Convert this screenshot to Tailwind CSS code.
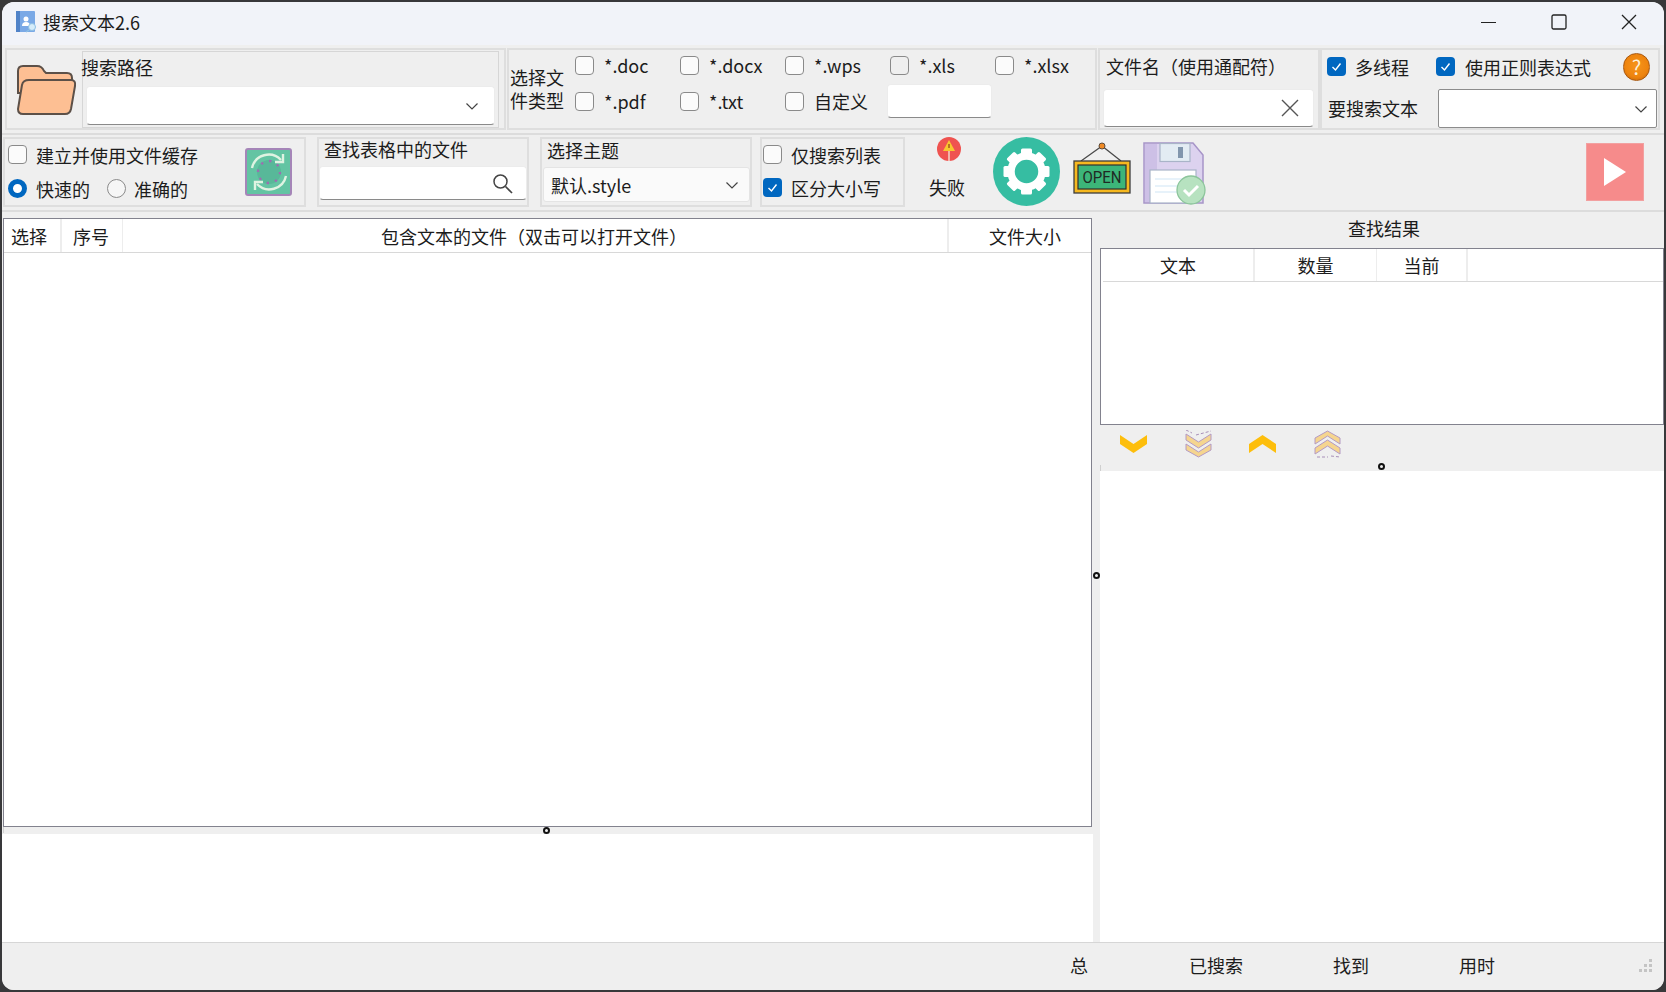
<!DOCTYPE html>
<html lang="zh-CN">
<head>
<meta charset="UTF-8">
<script src="https://cdn.jsdelivr.net/npm/@tailwindcss/browser@4"></script>
<title>搜索文本2.6</title>
</head>
<body class="m-0 w-[1666px] h-[992px] overflow-hidden bg-[#38383a] pt-[2px] pl-[2px] font-['Noto_Sans_CJK_SC',sans-serif] text-[18px] leading-[24px] text-[#1c1c1c]">
<div class="w-[1662px] h-[988px] rounded-[12px] overflow-hidden bg-[#efefef] flex flex-col">

  <!-- title bar -->
  <div class="h-[43px] shrink-0 bg-[#f1f3f9] flex items-center pb-[3px]">
    <svg class="ml-[14px] w-[21px] h-[22px]" viewBox="0 0 21 22">
      <rect x="0" y="0" width="19" height="21" rx="1" fill="#7aa9e6"/>
      <rect x="0" y="0" width="4" height="21" fill="#4f82c8"/>
      <circle cx="10" cy="8" r="2.5" fill="#fff"/>
      <path d="M6 15 Q6 11 10 11 Q14 11 14 15Z" fill="#fff"/>
      <circle cx="16" cy="16" r="3.5" fill="#d5ecfa" stroke="#8cbfe4"/>
      <path d="M13 19 L10 21" stroke="#8cbfe4" stroke-width="1.5"/>
    </svg>
    <span class="ml-[6px]">搜索文本2.6</span>
    <div class="ml-auto flex">
      <div class="w-[70px] h-[40px] flex items-center justify-center">
        <svg class="w-[16px] h-[16px]" viewBox="0 0 16 16"><path d="M0 8.5H15" stroke="#222" stroke-width="1.2"/></svg>
      </div>
      <div class="w-[70px] h-[40px] flex items-center justify-center">
        <svg class="w-[16px] h-[16px]" viewBox="0 0 16 16"><rect x="1" y="1" width="14" height="14" rx="1.5" fill="none" stroke="#222" stroke-width="1.3"/></svg>
      </div>
      <div class="w-[70px] h-[40px] flex items-center justify-center">
        <svg class="w-[16px] h-[16px]" viewBox="0 0 16 16"><path d="M1 1L15 15M15 1L1 15" stroke="#222" stroke-width="1.3"/></svg>
      </div>
    </div>
  </div>

  <!-- first toolbar row -->
  <div class="h-[90px] shrink-0 pt-[3px] pl-[3px] flex gap-[1px] border-b-2 border-[#dcdcdc]">
    <div class="w-[501px] h-[82px] border-2 border-[#dedede] flex">
      <svg class="ml-[8px] mt-[13px] w-[62px] h-[54px]" viewBox="0 0 62 54">
        <path d="M3 8Q3 3 8 3H22Q27 3 29 8L31 10H52Q57 10 57 15V30H3Z" fill="#fdbf93" stroke="#5c5048" stroke-width="2"/>
        <path d="M7 22Q8 17 14 17H56Q61 17 60 23L56 46Q55 51 50 51H8Q3 51 3 46Z" fill="#fdbf93" stroke="#5c5048" stroke-width="2"/>
      </svg>
      <div class="ml-[5px] mt-[1px] w-[417px] h-[77px] border border-[#d6d6d6]">
        <div class="pt-[3px] -ml-[2px]">搜索路径</div>
        <div class="ml-[3px] mt-[7px] w-[409px] h-[39px] bg-white rounded-[4px] border border-[#ececec] border-b-[#8a8a8a] flex items-center justify-end pr-[15px]">
          <svg class="w-[14px] h-[14px]" viewBox="0 0 14 14"><path d="M1.5 4.5L7 10L12.5 4.5" fill="none" stroke="#444" stroke-width="1.2"/></svg>
        </div>
      </div>
    </div>

    <div class="w-[590px] h-[82px] border-2 border-[#dedede] flex">
      <div class="w-[66px] shrink-0 pl-[1px] pt-[16px] leading-[23px]">选择文<br>件类型</div>
      <div class="grid grid-cols-[105px_105px_105px_105px_90px] grid-rows-[30px_30px] gap-y-[6px]">
        <div class="flex items-center gap-[10px]"><div class="w-[19px] h-[19px] rounded-[4px] border border-[#8a8a8a] bg-[#fbfbfb]"></div>*.doc</div>
        <div class="flex items-center gap-[10px]"><div class="w-[19px] h-[19px] rounded-[4px] border border-[#8a8a8a] bg-[#fbfbfb]"></div>*.docx</div>
        <div class="flex items-center gap-[10px]"><div class="w-[19px] h-[19px] rounded-[4px] border border-[#8a8a8a] bg-[#fbfbfb]"></div>*.wps</div>
        <div class="flex items-center gap-[10px]"><div class="w-[19px] h-[19px] rounded-[4px] border border-[#8a8a8a] bg-[#efefef]"></div>*.xls</div>
        <div class="flex items-center gap-[10px]"><div class="w-[19px] h-[19px] rounded-[4px] border border-[#8a8a8a] bg-[#fbfbfb]"></div>*.xlsx</div>
        <div class="flex items-center gap-[10px]"><div class="w-[19px] h-[19px] rounded-[4px] border border-[#8a8a8a] bg-[#fbfbfb]"></div>*.pdf</div>
        <div class="flex items-center gap-[10px]"><div class="w-[19px] h-[19px] rounded-[4px] border border-[#8a8a8a] bg-[#fbfbfb]"></div>*.txt</div>
        <div class="flex items-center gap-[10px]"><div class="w-[19px] h-[19px] rounded-[4px] border border-[#8a8a8a] bg-[#fbfbfb]"></div>自定义</div>
        <input type="text" class="self-center -ml-[3px] w-[105px] h-[34px] bg-white rounded-[4px] border border-[#ececec] border-b-[#8a8a8a]">
      </div>
    </div>

    <div class="w-[222px] h-[82px] border-2 border-[#dedede]">
      <div class="pl-[6px] pt-[4px]">文件名（使用通配符）</div>
      <div class="ml-[3px] mt-[11px] w-[211px] h-[38px] bg-white rounded-[4px] border border-[#ececec] border-b-[#8a8a8a] flex items-center justify-end pr-[14px]">
        <svg class="w-[18px] h-[18px]" viewBox="0 0 18 18"><path d="M1 1L17 17M17 1L1 17" stroke="#555" stroke-width="1.4"/></svg>
      </div>
    </div>

    <div class="w-[340px] h-[82px] border-2 border-[#dedede] -ml-px">
      <div class="mt-[2px] pl-[5px] flex items-center h-[29px]">
        <div class="w-[109px] flex items-center gap-[9px]">
          <div class="w-[19px] h-[19px] rounded-[4px] bg-[#0067c0] flex items-center justify-center"><svg class="w-[13px] h-[13px]" viewBox="0 0 13 13"><path d="M2.5 7L5.5 10L10.5 3.5" fill="none" stroke="#fff" stroke-width="1.4"/></svg></div>
          多线程
        </div>
        <div class="w-[187px] flex items-center gap-[10px]">
          <div class="w-[19px] h-[19px] rounded-[4px] bg-[#0067c0] flex items-center justify-center"><svg class="w-[13px] h-[13px]" viewBox="0 0 13 13"><path d="M2.5 7L5.5 10L10.5 3.5" fill="none" stroke="#fff" stroke-width="1.4"/></svg></div>
          使用正则表达式
        </div>
        <div class="w-[27px] h-[28px] rounded-full bg-[radial-gradient(circle_at_50%_45%,#f6941c_0%,#ee840e_60%,#b85c08_100%)] border border-[#a9580f] flex items-center justify-center text-[#fdf0dc] text-[20px]">?</div>
      </div>
      <div class="mt-[8px] flex items-center">
        <div class="w-[116px] pl-[6px] pb-[2px]">要搜索文本</div>
        <div class="w-[219px] h-[39px] bg-white border border-[#8c8c8c] rounded-[2px] flex items-center justify-end pr-[8px]">
          <svg class="w-[14px] h-[14px]" viewBox="0 0 14 14"><path d="M1.5 4.5L7 10L12.5 4.5" fill="none" stroke="#444" stroke-width="1.2"/></svg>
        </div>
      </div>
    </div>
  </div>

  <!-- second toolbar row -->
  <div class="h-[77px] shrink-0 pt-[2px] pl-[1px] flex border-b-2 border-[#dcdcdc]">
    <div class="w-[303px] h-[70px] border-2 border-[#dedede] flex">
      <div class="pl-[3px] pt-[6px]">
        <div class="flex items-center gap-[9px] h-[19px]"><div class="w-[19px] h-[19px] rounded-[4px] border border-[#8a8a8a] bg-[#fbfbfb]"></div>建立并使用文件缓存</div>
        <div class="flex items-center mt-[15px] h-[19px]">
          <div class="w-[19px] h-[19px] rounded-full border-[5px] border-[#0067c0] bg-white"></div>
          <span class="ml-[9px]">快速的</span>
          <div class="ml-[17px] w-[19px] h-[19px] rounded-full border border-[#8a8a8a] bg-[#f6f6f6]"></div>
          <span class="ml-[8px]">准确的</span>
        </div>
      </div>
      <div class="ml-auto mr-[12px] mt-[9px] w-[47px] h-[48px] rounded-[3px] border-2 border-[#a585b8] bg-[#63c4a3] flex items-center justify-center">
        <svg class="w-[42px] h-[42px]" viewBox="0 0 42 42">
          <circle cx="21" cy="21" r="12" fill="#58b899"/>
          <circle cx="21" cy="21" r="11" fill="none" stroke="#9c6fb0" stroke-width="2.4" stroke-dasharray="2.4 6.2"/>
          <path d="M4 17A17 17 0 0 1 33 9" fill="none" stroke="#dff3e2" stroke-width="2.4"/>
          <path d="M35 3V11H27" fill="none" stroke="#dff3e2" stroke-width="2.4"/>
          <path d="M38 25A17 17 0 0 1 9 33" fill="none" stroke="#dff3e2" stroke-width="2.4"/>
          <path d="M7 39V31H15" fill="none" stroke="#dff3e2" stroke-width="2.4"/>
        </svg>
      </div>
    </div>

    <div class="ml-[11px] w-[212px] h-[70px] border-2 border-[#dedede]">
      <div class="pl-[5px] -mt-[2px]">查找表格中的文件</div>
      <div class="mt-[5px] w-[208px] h-[34px] bg-white rounded-[4px] border border-[#ececec] border-b-[#8a8a8a] flex items-center justify-end pr-[13px]">
        <svg class="w-[21px] h-[21px]" viewBox="0 0 21 21"><circle cx="8.5" cy="8.5" r="6.5" fill="none" stroke="#444" stroke-width="1.5"/><path d="M13.5 13.5L20 20" stroke="#444" stroke-width="1.7"/></svg>
      </div>
    </div>

    <div class="ml-[11px] w-[212px] h-[70px] border-2 border-[#dedede]">
      <div class="pl-[5px] -mt-[1px]">选择主题</div>
      <div class="ml-[1px] mt-[5px] w-[207px] h-[35px] bg-[#fafafa] rounded-[3px] border border-[#e4e4e4] flex items-center justify-between pl-[7px] pr-[10px]">
        <span>默认.style</span>
        <svg class="w-[14px] h-[14px]" viewBox="0 0 14 14"><path d="M1.5 4.5L7 10L12.5 4.5" fill="none" stroke="#444" stroke-width="1.2"/></svg>
      </div>
    </div>

    <div class="ml-[8px] w-[145px] h-[70px] border-2 border-[#dedede] pl-[1px] pt-[6px]">
      <div class="flex items-center gap-[9px] h-[19px]"><div class="w-[19px] h-[19px] rounded-[4px] border border-[#8a8a8a] bg-[#fbfbfb]"></div>仅搜索列表</div>
      <div class="flex items-center gap-[9px] h-[19px] mt-[14px]">
        <div class="w-[19px] h-[19px] rounded-[4px] bg-[#0067c0] flex items-center justify-center"><svg class="w-[13px] h-[13px]" viewBox="0 0 13 13"><path d="M2.5 7L5.5 10L10.5 3.5" fill="none" stroke="#fff" stroke-width="1.4"/></svg></div>
        区分大小写
      </div>
    </div>

    <div class="ml-[24px] w-[36px] flex flex-col items-center">
      <svg class="ml-[3px] w-[24px] h-[24px]" viewBox="0 0 24 24">
        <circle cx="12" cy="12" r="12" fill="#ef5350"/>
        <path d="M12 3L18 14H6Z" fill="#f7c62f"/>
        <path d="M12 7V11" stroke="#a5561c" stroke-width="1.5"/>
        <path d="M12 14V24" stroke="#f4d6c9" stroke-width="1.5"/>
      </svg>
      <span class="mt-[14px]">失败</span>
    </div>

    <svg class="ml-[28px] w-[67px] h-[69px]" viewBox="0 0 67 69">
      <ellipse cx="33.5" cy="34.5" rx="33.5" ry="34.5" fill="#36bda2"/>
      <circle cx="33.5" cy="34.5" r="15.5" fill="none" stroke="#fff" stroke-width="7.5"/>
      <g fill="#fff">
        <rect x="28" y="11.5" width="11" height="8" rx="1.5"/>
        <rect x="28" y="11.5" width="11" height="8" rx="1.5" transform="rotate(45 33.5 34.5)"/>
        <rect x="28" y="11.5" width="11" height="8" rx="1.5" transform="rotate(90 33.5 34.5)"/>
        <rect x="28" y="11.5" width="11" height="8" rx="1.5" transform="rotate(135 33.5 34.5)"/>
        <rect x="28" y="11.5" width="11" height="8" rx="1.5" transform="rotate(180 33.5 34.5)"/>
        <rect x="28" y="11.5" width="11" height="8" rx="1.5" transform="rotate(225 33.5 34.5)"/>
        <rect x="28" y="11.5" width="11" height="8" rx="1.5" transform="rotate(270 33.5 34.5)"/>
        <rect x="28" y="11.5" width="11" height="8" rx="1.5" transform="rotate(315 33.5 34.5)"/>
      </g>
    </svg>

    <svg class="ml-[13px] mt-[5px] w-[58px] h-[53px]" viewBox="0 0 58 53">
      <path d="M29 4L8 19M29 4L48 19" fill="none" stroke="#4a4a4a" stroke-width="1.3"/>
      <circle cx="29" cy="4" r="3" fill="#f08a24" stroke="#5c4a3a"/>
      <rect x="1" y="19" width="56" height="32" fill="#f6b81f" stroke="#3d3d3d" stroke-width="1.3"/>
      <rect x="5" y="23" width="48" height="24" fill="#3cb579" stroke="#2f2f2f" stroke-width="1.2"/>
      <text x="29" y="41" text-anchor="middle" font-family="Roboto, sans-serif" font-size="16" textLength="39" lengthAdjust="spacingAndGlyphs" fill="#1f2a24">OPEN</text>
    </svg>

    <svg class="ml-[12px] mt-[5px] w-[63px] h-[63px]" viewBox="0 0 63 63">
      <path d="M1 1H50L60 13V61H1Z" fill="#dcd2ef" stroke="#a795c8" stroke-width="1.5"/>
      <rect x="2" y="2" width="12" height="58" fill="#cdc0e6"/>
      <rect x="17" y="1.5" width="30" height="18" fill="#e3ecf3" stroke="#a9b4c8" stroke-width="1.2"/>
      <rect x="35" y="5" width="5" height="11" fill="#8296ad"/>
      <rect x="7" y="28" width="46" height="33" fill="#fff" stroke="#a9b4c8" stroke-width="1.2"/>
      <path d="M12 37H48M12 44H48M12 50H48" stroke="#cfe6f6" stroke-width="1.2"/>
      <circle cx="48" cy="48" r="14" fill="#b7e2c0" stroke="#8cc59b" stroke-width="1.3"/>
      <path d="M41 48L46 53L55 44" fill="none" stroke="#fff" stroke-width="3"/>
    </svg>

    <div class="ml-[380px] mt-[6px] w-[58px] h-[58px] bg-[#f68b8b] border border-[#f2a0a0] flex items-center justify-center">
      <svg class="w-[24px] h-[30px]" viewBox="0 0 24 30"><path d="M1 1L23 15L1 29Z" fill="#fff"/></svg>
    </div>
  </div>

  <!-- main area -->
  <div class="flex flex-1 min-h-0">
    <div class="w-[1091px] shrink-0 flex flex-col">
      <div class="h-[6px] bg-[#efefef]"></div>
      <div class="ml-px w-[1089px] h-[609px] bg-white border border-[#82828e]">
        <div class="flex h-[34px] border-b border-[#d8d8d8]">
          <div class="w-[58px] pl-[7px] flex items-center border-r-2 border-[#ededed]">选择</div>
          <div class="w-[61px] pl-[11px] flex items-center border-r border-[#ededed]">序号</div>
          <div class="w-[826px] pr-[2px] flex items-center justify-center border-r-2 border-[#ededed]">包含文本的文件（双击可以打开文件）</div>
          <div class="flex-1 pl-[10px] flex items-center justify-center">文件大小</div>
        </div>
      </div>
      <div class="relative h-[7px] bg-[#efefef]">
        <div class="absolute left-[1px] top-0 w-[1px] h-[6px] bg-[#d0d0d0]"></div>
        <div class="absolute left-[541px] top-0 w-[7px] h-[7px] rounded-full border-2 border-[#111]"></div>
      </div>
      <div class="flex-1 bg-white"></div>
    </div>

    <div class="relative w-[7px] shrink-0 bg-[#efefef]">
      <div class="absolute left-0 top-[360px] w-[7px] h-[7px] rounded-full border-2 border-[#111]"></div>
    </div>

    <div class="flex-1 flex flex-col">
      <div class="h-[36px] shrink-0 pl-[4px] pb-[4px] flex items-center justify-center bg-[#efefef]">查找结果</div>
      <div class="h-[177px] shrink-0 bg-white border border-[#82828e] pl-[2px]">
        <div class="flex h-[33px] border-b border-[#d8d8d8]">
          <div class="w-[152px] flex items-center justify-center border-r-2 border-[#ededed]">文本</div>
          <div class="w-[122px] flex items-center justify-center border-r border-[#ededed]">数量</div>
          <div class="w-[91px] flex items-center justify-center border-r-2 border-[#ededed]">当前</div>
        </div>
      </div>
      <div class="relative h-[46px] shrink-0 bg-[#efefef] flex items-center pl-[20px] pb-[9px]">
        <svg class="w-[27px] h-[18px]" viewBox="0 0 27 18"><path d="M0 0L13.5 9L27 0V9L13.5 18L0 9Z" fill="#fdbe0c"/></svg>
        <svg class="ml-[38px] w-[27px] h-[28px]" viewBox="0 0 27 28">
          <path d="M1 0L7 3M11 5L26 1" fill="none" stroke="#a88fb8" stroke-width="1" stroke-dasharray="3 2"/>
          <path d="M1 4L13.5 12L26 4V10L13.5 18L1 10Z" fill="#f5d58f" stroke="#b49ac4"/>
          <path d="M1 14L13.5 22L26 14V20L13.5 27L1 20Z" fill="#f5d58f" stroke="#b49ac4"/>
        </svg>
        <svg class="ml-[37px] w-[27px] h-[18px]" viewBox="0 0 27 18"><path d="M0 18V9L13.5 0L27 9V18L13.5 9Z" fill="#fdbe0c"/></svg>
        <svg class="ml-[38px] w-[27px] h-[28px]" viewBox="0 0 27 28">
          <path d="M1 8L13.5 1L26 8V14L13.5 6L1 14Z" fill="#f5d58f" stroke="#b49ac4"/>
          <path d="M1 18L13.5 10L26 18V24L13.5 16L1 24Z" fill="#f5d58f" stroke="#b49ac4"/>
          <path d="M3 27H14M17 26L26 27" fill="none" stroke="#a88fb8" stroke-width="1" stroke-dasharray="3 2"/>
        </svg>
        <div class="absolute left-0 bottom-0 w-[1px] h-[6px] bg-[#cfcfcf]"></div>
        <div class="absolute left-[278px] top-[38px] w-[7px] h-[7px] rounded-full border-2 border-[#111]"></div>
      </div>
      <div class="flex-1 bg-white"></div>
    </div>
  </div>

  <!-- status bar -->
  <div class="h-[48px] shrink-0 border-t border-[#d6d6d6] bg-[#efefef] flex items-center pl-[1068px] pb-[4px]">
    <span>总</span>
    <span class="ml-[101px]">已搜索</span>
    <span class="ml-[90px]">找到</span>
    <span class="ml-[90px]">用时</span>
    <svg class="ml-auto mr-[11px] mt-[3px] w-[14px] h-[14px]" viewBox="0 0 14 14" fill="#c4c4c4">
      <rect x="10" y="0" width="3" height="3"/><rect x="5" y="5" width="3" height="3"/><rect x="10" y="5" width="3" height="3"/>
      <rect x="0" y="10" width="3" height="3"/><rect x="5" y="10" width="3" height="3"/><rect x="10" y="10" width="3" height="3"/>
    </svg>
  </div>
</div>
</body>
</html>
